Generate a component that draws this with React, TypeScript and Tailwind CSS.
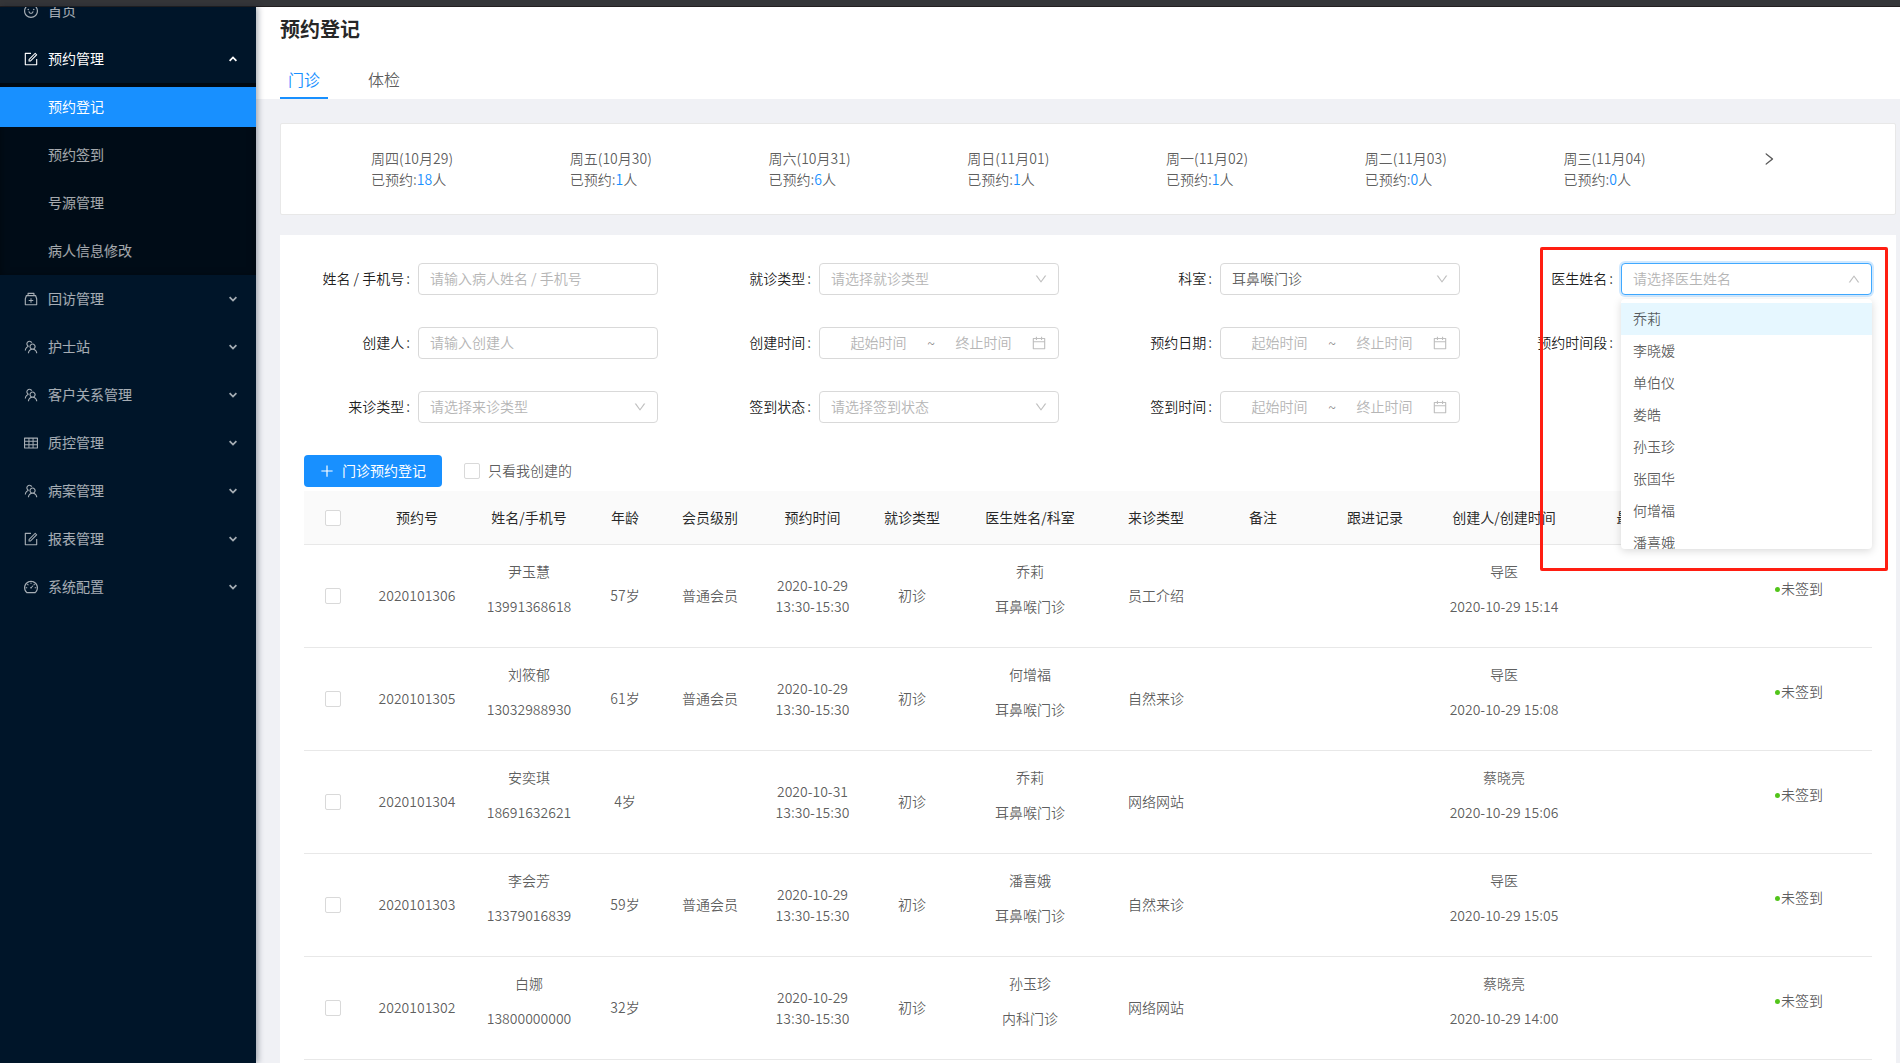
import React from "react";
import {
  AiOutlineCalendar,
  AiOutlineDashboard,
  AiOutlineDown,
  AiOutlineForm,
  AiOutlineMedicineBox,
  AiOutlinePlus,
  AiOutlineRight,
  AiOutlineSmile,
  AiOutlineTable,
  AiOutlineTeam,
  AiOutlineUp,
} from "react-icons/ai";
import type { IconType } from "react-icons";

const menu: { label: string; icon: IconType }[] = [
  { label: "回访管理", icon: AiOutlineMedicineBox },
  { label: "护士站", icon: AiOutlineTeam },
  { label: "客户关系管理", icon: AiOutlineTeam },
  { label: "质控管理", icon: AiOutlineTable },
  { label: "病案管理", icon: AiOutlineTeam },
  { label: "报表管理", icon: AiOutlineForm },
  { label: "系统配置", icon: AiOutlineDashboard },
];

const subMenu = ["预约登记", "预约签到", "号源管理", "病人信息修改"];

const days = [
  { day: "周四(10月29)", count: 18 },
  { day: "周五(10月30)", count: 1 },
  { day: "周六(10月31)", count: 6 },
  { day: "周日(11月01)", count: 1 },
  { day: "周一(11月02)", count: 1 },
  { day: "周二(11月03)", count: 0 },
  { day: "周三(11月04)", count: 0 },
];

const doctors = ["乔莉", "李晓嫒", "单伯仪", "娄皓", "孙玉珍", "张国华", "何增福", "潘喜娥"];

const columns = [
  { title: "预约号", width: "w-[110px]" },
  { title: "姓名/手机号", width: "w-[114px]" },
  { title: "年龄", width: "w-[78px]" },
  { title: "会员级别", width: "w-[92px]" },
  { title: "预约时间", width: "w-[113px]" },
  { title: "就诊类型", width: "w-[86px]" },
  { title: "医生姓名/科室", width: "w-[150px]" },
  { title: "来诊类型", width: "w-[102px]" },
  { title: "备注", width: "w-[112px]" },
  { title: "跟进记录", width: "w-[112px]" },
  { title: "创建人/创建时间", width: "w-[146px]" },
  { title: "最近修改人", width: "w-[149px]" },
  { title: "签到状态", width: "w-[146px]" },
];

const rows = [
  { id: "2020101306", name: "尹玉慧", phone: "13991368618", age: "57岁", level: "普通会员", date: "2020-10-29", doctor: "乔莉", dept: "耳鼻喉门诊", source: "员工介绍", by: "导医", at: "2020-10-29 15:14" },
  { id: "2020101305", name: "刘筱郁", phone: "13032988930", age: "61岁", level: "普通会员", date: "2020-10-29", doctor: "何增福", dept: "耳鼻喉门诊", source: "自然来诊", by: "导医", at: "2020-10-29 15:08" },
  { id: "2020101304", name: "安奕琪", phone: "18691632621", age: "4岁", level: "", date: "2020-10-31", doctor: "乔莉", dept: "耳鼻喉门诊", source: "网络网站", by: "蔡晓亮", at: "2020-10-29 15:06" },
  { id: "2020101303", name: "李会芳", phone: "13379016839", age: "59岁", level: "普通会员", date: "2020-10-29", doctor: "潘喜娥", dept: "耳鼻喉门诊", source: "自然来诊", by: "导医", at: "2020-10-29 15:05" },
  { id: "2020101302", name: "白娜", phone: "13800000000", age: "32岁", level: "", date: "2020-10-29", doctor: "孙玉珍", dept: "内科门诊", source: "网络网站", by: "蔡晓亮", at: "2020-10-29 14:00" },
];

function Caret({ up = false }: { up?: boolean }) {
  return (
    <svg className="ml-auto h-2 w-2" viewBox="0 0 8 8" fill="none" stroke="currentColor" strokeWidth="1.8" aria-hidden="true">
      <path d={up ? "M0.6 5.8 4 2.4 7.4 5.8" : "M0.6 2.2 4 5.6 7.4 2.2"} />
    </svg>
  );
}

function Sidebar() {
  return (
    <nav className="z-10 w-64 shrink-0 overflow-hidden bg-[#001529] text-white/65 shadow-[2px_0_6px_rgba(0,21,41,0.35)]">
      <div className="-mt-4">
        <a href="#home" className="flex h-10 items-center gap-[9px] pl-[23px]">
          <AiOutlineSmile className="h-4 w-4" />
          <span className="pb-0.5">首页</span>
        </a>
        <button type="button" className="my-2 flex h-10 w-full items-center gap-[9px] pr-[19px] pl-[23px] text-white" aria-expanded="true">
          <AiOutlineForm className="h-4 w-4" />
          <span className="pb-0.5">预约管理</span>
          <Caret up />
        </button>
      </div>
      <div className="-mt-1 flex flex-col gap-2 bg-[#000c17] py-1 shadow-[inset_0_2px_8px_rgba(0,0,0,0.45)]">
        {subMenu.map((label, i) => (
          <a
            key={label}
            href={`#sub-${i}`}
            className={i === 0 ? "flex h-10 items-center bg-[#1890ff] pb-0.5 pl-12 text-white" : "flex h-10 items-center pb-0.5 pl-12"}
          >
            {label}
          </a>
        ))}
      </div>
      <div className="flex flex-col gap-2 py-1">
        {menu.map(({ label, icon: Icon }) => (
          <button key={label} type="button" className="flex h-10 items-center gap-[9px] pr-[19px] pl-[23px]" aria-expanded="false">
            <Icon className="h-4 w-4" />
            <span className="pb-0.5">{label}</span>
            <Caret />
          </button>
        ))}
      </div>
    </nav>
  );
}

const boxClass = "h-8 w-full rounded border border-[#d9d9d9] bg-white px-[11px] pb-0.5 placeholder:text-[#b5b5b5]";

function Field({ label, id, wide = false, children }: { label: string; id: string; wide?: boolean; children?: React.ReactNode }) {
  return (
    <div className="relative flex h-8 items-center">
      <label htmlFor={id} className="w-[114px] shrink-0 pr-2 pb-0.5 text-right whitespace-nowrap text-black/90">
        {label}
        <span className="ml-0.5">:</span>
      </label>
      <div className={wide ? "relative min-w-0 flex-1" : "relative mr-[11px] min-w-0 flex-1"}>{children}</div>
    </div>
  );
}

function TextField({ label, id, placeholder }: { label: string; id: string; placeholder: string }) {
  return (
    <Field label={label} id={id}>
      <input id={id} type="text" placeholder={placeholder} className={boxClass} />
    </Field>
  );
}

function SelectField({ label, id, value, filled = false }: { label: string; id: string; value: string; filled?: boolean }) {
  return (
    <Field label={label} id={id}>
      <select id={id} className={`${boxClass} appearance-none ${filled ? "" : "text-[#b5b5b5]"}`}>
        <option>{value}</option>
      </select>
      <AiOutlineDown className="pointer-events-none absolute top-[9px] right-[11px] text-[#bfbfbf]" />
    </Field>
  );
}

function RangeField({ label, id }: { label: string; id: string }) {
  return (
    <Field label={label} id={id}>
      <div className="flex h-8 items-center rounded border border-[#d9d9d9] bg-white px-[11px]">
        <input id={id} type="text" placeholder="起始时间" className="min-w-0 flex-1 pb-0.5 text-center placeholder:text-[#b5b5b5]" />
        <span className="w-2.5 text-center text-black/50">~</span>
        <input type="text" aria-label={`${label}终止时间`} placeholder="终止时间" className="min-w-0 flex-1 pb-0.5 text-center placeholder:text-[#b5b5b5]" />
        <AiOutlineCalendar className="h-4 w-4 shrink-0 text-[#bfbfbf]" />
      </div>
    </Field>
  );
}

function DoctorField() {
  return (
    <Field label="医生姓名" id="doctor" wide>
      <select
        id="doctor"
        className="h-8 w-full appearance-none rounded border border-[#40a9ff] bg-white px-[11px] pb-0.5 text-[#b5b5b5] shadow-[0_0_0_2px_rgba(24,144,255,0.2)]"
      >
        <option>请选择医生姓名</option>
      </select>
      <AiOutlineUp className="pointer-events-none absolute top-[9px] right-[11px] text-[#bfbfbf]" />
      <ul
        role="listbox"
        aria-label="医生姓名"
        className="absolute top-9 right-0 left-0 z-20 h-[250px] overflow-hidden rounded bg-white py-1 shadow-[0_2px_8px_rgba(0,0,0,0.15)]"
      >
        {doctors.map((name, i) => (
          <li
            key={name}
            role="option"
            aria-selected={i === 0}
            className={i === 0 ? "flex h-8 items-center bg-[#e6f7ff] px-3 pb-0.5" : "flex h-8 items-center px-3 pb-0.5"}
          >
            {name}
          </li>
        ))}
      </ul>
      <div className="pointer-events-none absolute -top-4 -right-4 -left-[81px] z-30 h-[324px] rounded-xs border-3 border-[#ff1e12]" />
    </Field>
  );
}

function Filters() {
  return (
    <form className="grid grid-cols-4 gap-x-9 gap-y-8">
      <TextField label="姓名 / 手机号" id="patient" placeholder="请输入病人姓名 / 手机号" />
      <SelectField label="就诊类型" id="visit" value="请选择就诊类型" />
      <SelectField label="科室" id="dept" value="耳鼻喉门诊" filled />
      <DoctorField />
      <TextField label="创建人" id="creator" placeholder="请输入创建人" />
      <RangeField label="创建时间" id="created" />
      <RangeField label="预约日期" id="booked" />
      <Field label="预约时间段" id="slot">
        <select id="slot" className={`${boxClass} appearance-none`} />
      </Field>
      <SelectField label="来诊类型" id="source" value="请选择来诊类型" />
      <SelectField label="签到状态" id="status" value="请选择签到状态" />
      <RangeField label="签到时间" id="signed" />
    </form>
  );
}

function Check({ label, id }: { label?: string; id: string }) {
  return (
    <input
      id={id}
      type="checkbox"
      aria-label={label}
      className="block h-4 w-4 shrink-0 appearance-none rounded-xs border border-[#d9d9d9] bg-white"
    />
  );
}

function BookingTable() {
  return (
    <table className="mt-1 w-full table-fixed text-center">
      <colgroup>
        <col className="w-[58px]" />
        {columns.map((c) => (
          <col key={c.title} className={c.width} />
        ))}
      </colgroup>
      <thead>
        <tr className="h-[53px] border-b border-[#e8e8e8] bg-[#fafafa] text-black/85">
          <th className="pt-0.5 pl-[21px]">
            <Check id="check-all" label="全选" />
          </th>
          {columns.map((c) => (
            <th key={c.title} className="font-normal whitespace-nowrap">
              {c.title}
            </th>
          ))}
        </tr>
      </thead>
      <tbody>
        {rows.map((r) => (
          <tr key={r.id} className="h-[103px] border-b border-[#e8e8e8]">
            <td className="pl-[21px]">
              <Check id={`check-${r.id}`} label={r.id} />
            </td>
            <td>{r.id}</td>
            <td>
              <p className="mb-3.5">{r.name}</p>
              <p className="mb-3.5">{r.phone}</p>
            </td>
            <td>{r.age}</td>
            <td>{r.level}</td>
            <td>
              {r.date}
              <br />
              13:30-15:30
            </td>
            <td>初诊</td>
            <td>
              <p className="mb-3.5">{r.doctor}</p>
              <p className="mb-3.5">{r.dept}</p>
            </td>
            <td>{r.source}</td>
            <td />
            <td />
            <td>
              <p className="mb-3.5">{r.by}</p>
              <p className="mb-3.5">{r.at}</p>
            </td>
            <td />
            <td>
              <p className="mb-3.5 flex items-center justify-center">
                <span className="mt-0.5 mr-px h-[5px] w-[5px] rounded-full bg-[#52c41a]" />
                未签到
              </p>
            </td>
          </tr>
        ))}
      </tbody>
    </table>
  );
}

export default function App() {
  return (
    <div className="flex h-screen flex-col overflow-hidden bg-[#f0f1f5] font-['Noto_Sans_CJK_SC',sans-serif] text-sm leading-[21px] font-normal text-black/65">
      <div className="h-[7px] shrink-0 border-b border-[#231f20] bg-[#353639]" />
      <div className="flex min-h-0 flex-1">
        <Sidebar />
        <main className="min-w-0 flex-1 overflow-hidden font-[350]">
          <header className="bg-white pl-6">
            <h1 className="pt-1.5 text-xl leading-8 font-bold text-black/85">预约登记</h1>
            <div role="tablist" className="mt-3 flex gap-8 text-base">
              <button type="button" role="tab" aria-selected="true" className="h-[42px] border-b-2 border-[#1890ff] px-2 pt-2.5 pb-1.5 text-[#1890ff]">
                门诊
              </button>
              <button type="button" role="tab" aria-selected="false" className="h-[42px] border-b-2 border-transparent px-2 pt-2.5 pb-1.5">
                体检
              </button>
            </div>
          </header>
          <section className="mt-6 mr-1 ml-6 grid grid-cols-8 rounded-xs border border-[#e8e8e8] bg-white px-3 py-6">
            {days.map((d) => (
              <div key={d.day} className="pl-[78px] whitespace-nowrap">
                <p>{d.day}</p>
                <p>
                  已预约:<span className="text-[#1890ff]">{d.count}</span>人
                </p>
              </div>
            ))}
            <div className="pl-[77px]">
              <button type="button" aria-label="下一周" className="block py-[3px]">
                <AiOutlineRight className="h-4 w-4" />
              </button>
            </div>
          </section>
          <section className="mt-5 mr-1 ml-6 bg-white px-6 pt-7 pb-6">
            <Filters />
            <div className="mt-8 flex items-center">
              <button type="button" className="flex h-8 items-center gap-[7px] rounded bg-[#1890ff] pr-4 pl-[15px] font-normal text-white">
                <AiOutlinePlus className="h-4 w-4" />
                <span className="pb-0.5">门诊预约登记</span>
              </button>
              <label htmlFor="mine" className="ml-[22px] flex items-center gap-2">
                <Check id="mine" />
                <span className="pb-0.5">只看我创建的</span>
              </label>
            </div>
            <BookingTable />
          </section>
        </main>
      </div>
    </div>
  );
}
